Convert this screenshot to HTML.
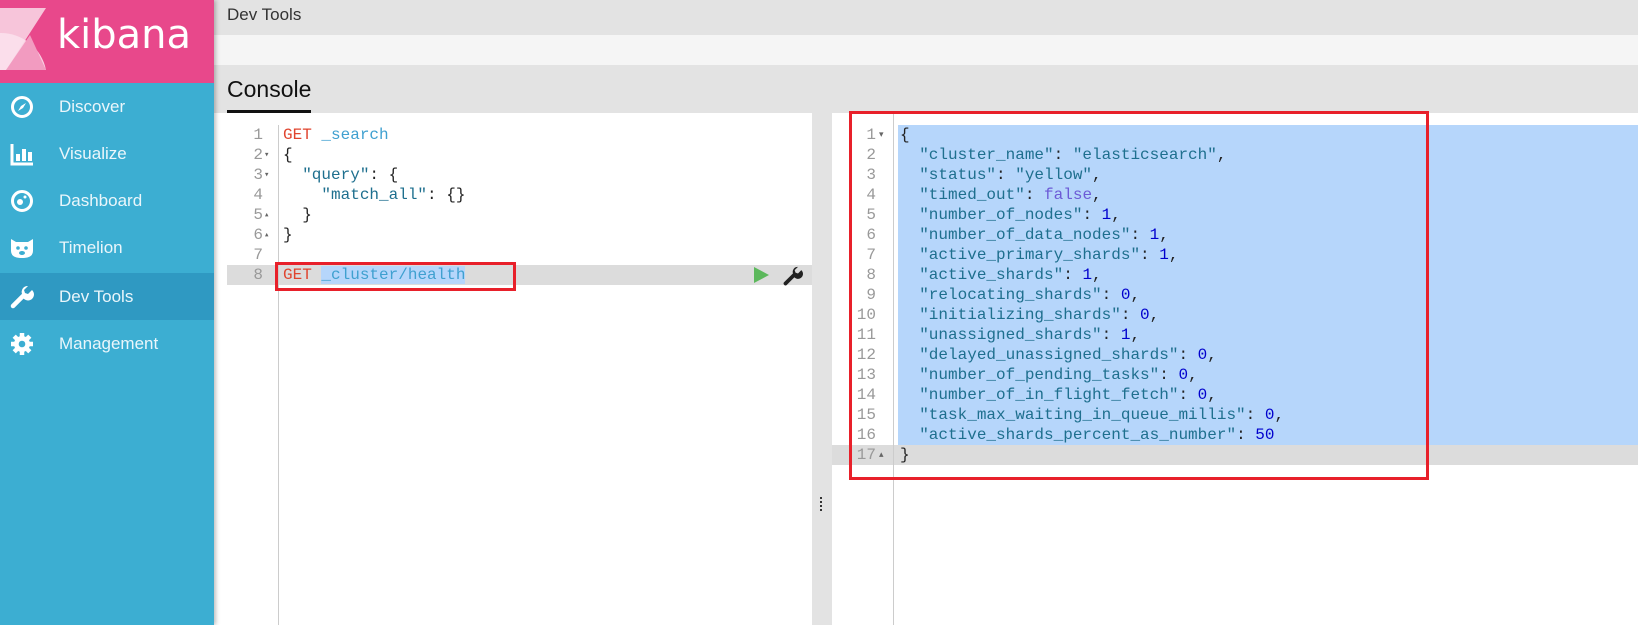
<!DOCTYPE html>
<html><head><meta charset="utf-8"><style>
*{margin:0;padding:0;box-sizing:border-box}
body{width:1638px;height:625px;overflow:hidden;background:#fff;font-family:"Liberation Sans",sans-serif;position:relative}
.a{position:absolute}
#side{left:0;top:0;width:214px;height:625px;background:#3caed2;box-shadow:2px 0 4px rgba(0,0,0,.25);z-index:5}
#logo{left:0;top:0;width:214px;height:83px;background:#e8488b;overflow:hidden}
.nav{left:0;width:214px;height:47px;color:#eaf6fb;font-size:17px;line-height:47px;padding-left:59px}
.nav svg{position:absolute;left:10px;top:12px}
.mono{font-family:"Liberation Mono",monospace;font-size:16px;line-height:20px;white-space:pre}
.ln{color:#999;text-align:right}
.k{color:#1e6f8e}.g{color:#e0442e}.u{color:#3fa0d0}.n{color:#0000cd}.f{color:#6c5bd6}.p{color:#222}
</style></head><body>
<div id="side" class="a">
 <div id="logo" class="a">
  <svg class="a" style="left:0;top:0" width="50" height="83"><polygon points="0,8 46,8 6,70 0,70" fill="#f7c5da"/><path d="M0,33 A46,46 0 0 1 46,70 L0,70Z" fill="#fbe0ec" opacity=".9"/><polygon points="6,70 30,35 46,70" fill="#f29bc0"/></svg>
  <div class="a" style="left:57px;top:12px;color:#fff;font-size:40px;font-family:'DejaVu Sans',sans-serif">kibana</div>
 </div>
 <div class="a nav" style="top:83px"><svg width="24" height="24" viewBox="0 0 24 24"><circle cx="12" cy="12" r="9.5" fill="none" stroke="#fff" stroke-width="3"/><polygon points="16,8 13,13 8,16 11,11" fill="#fff"/></svg>Discover</div>
 <div class="a nav" style="top:130px"><svg width="24" height="24" viewBox="0 0 24 24"><path d="M2,2V22H23" fill="none" stroke="#fff" stroke-width="3"/><rect x="6" y="12" width="4" height="7" fill="#fff"/><rect x="12" y="7" width="4" height="12" fill="#fff"/><rect x="18" y="10" width="4" height="9" fill="#fff"/></svg>Visualize</div>
 <div class="a nav" style="top:177px"><svg width="24" height="24" viewBox="0 0 24 24"><circle cx="12" cy="12" r="9.5" fill="none" stroke="#fff" stroke-width="3"/><circle cx="10" cy="13" r="3" fill="#fff"/><circle cx="15" cy="8" r="1.5" fill="#fff"/></svg>Dashboard</div>
 <div class="a nav" style="top:224px"><svg width="24" height="24" viewBox="0 0 24 24"><path d="M1,3 L6,6 H18 L23,3 V15 Q23,22 12,22 Q1,22 1,15Z" fill="#fff"/><circle cx="8" cy="12" r="1.8" fill="#3caed2"/><circle cx="16" cy="12" r="1.8" fill="#3caed2"/><ellipse cx="12" cy="17" rx="3" ry="2" fill="#3caed2"/></svg>Timelion</div>
 <div class="a nav" style="top:273px;background:#2f99c2"><svg width="24" height="24" viewBox="0 0 24 24"><path d="M3,21 L13,11" stroke="#fff" stroke-width="4.5" stroke-linecap="round"/><path d="M12,9 A6,6 0 1 0 22,5 L18,9 L15,8 L14,5 L18,1 A6,6 0 0 0 12,9Z" fill="#fff"/></svg>Dev Tools</div>
 <div class="a nav" style="top:320px"><svg width="24" height="24" viewBox="0 0 24 24"><circle cx="12" cy="12" r="8" fill="#fff"/><g stroke="#fff" stroke-width="4.5"><path d="M12,1V23M1,12H23M4.2,4.2L19.8,19.8M19.8,4.2L4.2,19.8"/></g><circle cx="12" cy="12" r="3.3" fill="#3caed2"/></svg>Management</div>
</div>
<div class="a" style="left:214px;top:0;width:1424px;height:35px;background:#e3e3e3"></div>
<div class="a" style="left:227px;top:5px;font-size:17px;color:#333">Dev Tools</div>
<div class="a" style="left:214px;top:35px;width:1424px;height:30px;background:#f5f5f5"></div>
<div class="a" style="left:214px;top:65px;width:1424px;height:48px;background:#e3e3e3"></div>
<div class="a" style="left:227px;top:76px;font-size:23px;color:#111">Console</div>
<div class="a" style="left:227px;top:110px;width:84px;height:3px;background:#111"></div>
<!-- left editor -->
<div class="a" style="left:812px;top:113px;width:20px;height:512px;background:#e3e3e3"></div>
<div class="a" style="left:820px;top:497px;width:2px;height:14px;border-left:2px dotted #333"></div>
<div class="a" style="left:227px;top:265px;width:585px;height:20px;background:#dcdcdc"></div>
<div class="a" style="left:278px;top:125px;width:1px;height:500px;background:#ccc"></div>
<div class="a mono ln" style="left:227px;top:125px;width:36px">1
2
3
4
5
6
7
8</div>
<div class="a mono" style="left:264px;top:125px;color:#666;font-size:9px;line-height:20px">
▾
▾

▴
▴</div>
<div class="a mono" style="left:283px;top:125px"><span class="g">GET</span> <span class="u">_search</span>
<span class="p">{</span>
  <span class="k">"query"</span><span class="p">: {</span>
    <span class="k">"match_all"</span><span class="p">: {}</span>
  <span class="p">}</span>
<span class="p">}</span>

<span class="g">GET</span> <span class="u" style="background:#b6d6fb">_cluster/health</span></div>
<svg class="a" style="left:752px;top:266px" width="18" height="18"><polygon points="2,1 17,9 2,17" fill="#5cb85c"/></svg>
<svg class="a" style="left:783px;top:266px" width="20" height="20" viewBox="0 0 24 24"><path d="M3,21 L13,11" stroke="#222" stroke-width="4.5" stroke-linecap="round"/><path d="M12,9 A6,6 0 1 0 22,5 L18,9 L15,8 L14,5 L18,1 A6,6 0 0 0 12,9Z" fill="#222"/></svg>
<div class="a" style="left:275px;top:262px;width:241px;height:29px;border:3px solid #e8202a"></div>
<!-- right editor -->
<div class="a" style="left:898px;top:125px;width:740px;height:320px;background:#b6d6fb"></div>
<div class="a" style="left:832px;top:445px;width:806px;height:20px;background:#dcdcdc"></div>
<div class="a" style="left:893px;top:113px;width:1px;height:512px;background:#ccc"></div>
<div class="a mono ln" style="left:832px;top:125px;width:44px">1
2
3
4
5
6
7
8
9
10
11
12
13
14
15
16
17</div>
<div class="a" style="left:879px;top:130px;color:#666;font-size:9px;line-height:9px">▾</div>
<div class="a" style="left:879px;top:450px;color:#666;font-size:9px;line-height:9px">▴</div>
<div class="a mono" style="left:900px;top:125px"><span class="p">{</span>
  <span class="k">"cluster_name"</span><span class="p">: </span><span class="k">"elasticsearch"</span><span class="p">,</span>
  <span class="k">"status"</span><span class="p">: </span><span class="k">"yellow"</span><span class="p">,</span>
  <span class="k">"timed_out"</span><span class="p">: </span><span class="f">false</span><span class="p">,</span>
  <span class="k">"number_of_nodes"</span><span class="p">: </span><span class="n">1</span><span class="p">,</span>
  <span class="k">"number_of_data_nodes"</span><span class="p">: </span><span class="n">1</span><span class="p">,</span>
  <span class="k">"active_primary_shards"</span><span class="p">: </span><span class="n">1</span><span class="p">,</span>
  <span class="k">"active_shards"</span><span class="p">: </span><span class="n">1</span><span class="p">,</span>
  <span class="k">"relocating_shards"</span><span class="p">: </span><span class="n">0</span><span class="p">,</span>
  <span class="k">"initializing_shards"</span><span class="p">: </span><span class="n">0</span><span class="p">,</span>
  <span class="k">"unassigned_shards"</span><span class="p">: </span><span class="n">1</span><span class="p">,</span>
  <span class="k">"delayed_unassigned_shards"</span><span class="p">: </span><span class="n">0</span><span class="p">,</span>
  <span class="k">"number_of_pending_tasks"</span><span class="p">: </span><span class="n">0</span><span class="p">,</span>
  <span class="k">"number_of_in_flight_fetch"</span><span class="p">: </span><span class="n">0</span><span class="p">,</span>
  <span class="k">"task_max_waiting_in_queue_millis"</span><span class="p">: </span><span class="n">0</span><span class="p">,</span>
  <span class="k">"active_shards_percent_as_number"</span><span class="p">: </span><span class="n">50</span>
<span class="p">}</span></div>
<div class="a" style="left:849px;top:111px;width:580px;height:369px;border:3px solid #e8202a"></div>
</body></html>
